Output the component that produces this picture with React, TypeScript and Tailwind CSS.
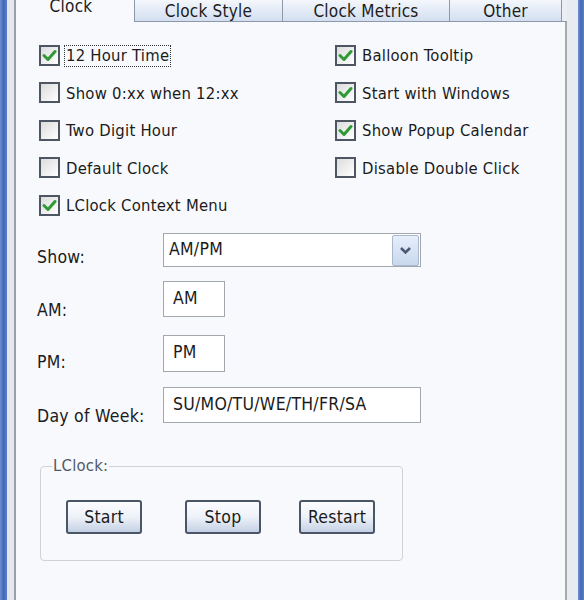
import React from "react";

const font = { fontFamily: '"DejaVu Sans Condensed", "DejaVu Sans", sans-serif', fontStretch: "semi-condensed" as const };

function Check({ checked, label, focus }: { checked?: boolean; label: string; focus?: boolean }) {
  return (
    <div className="flex items-center h-[22px]">
      <div className="w-[21px] h-[21px] border-2 border-[#4d5662] bg-gradient-to-br from-[#dcdcdc] to-[#ffffff] flex items-center justify-center shrink-0">
        {checked && (
          <svg width="15" height="13" viewBox="0 0 15 13">
            <path d="M2 6.5 L6 10.5 L13 2.5" stroke="#2f9a35" strokeWidth="3" fill="none" strokeLinecap="round" strokeLinejoin="round" />
          </svg>
        )}
      </div>
      <span
        className={
          "ml-[4px] px-[1px] leading-[20px] mt-[2px] " +
          (focus ? "border border-dotted border-[#333]" : "border border-transparent")
        }
      >
        {label}
      </span>
    </div>
  );
}

function Btn({ label }: { label: string }) {
  return (
    <div className="w-[76px] h-[34px] rounded-[3px] border-2 border-[#4a5566] bg-gradient-to-b from-[#fbfcfe] via-[#eef2f8] to-[#c4d1e4] flex items-center justify-center text-[#1a1a1a] text-[17.5px]">
      {label}
    </div>
  );
}

export default function App() {
  return (
    <div className="w-[584px] h-[600px] flex bg-[#eceef3] overflow-hidden text-[16.5px] tracking-[0.25px] text-[#1b1b1b]" style={font}>
      {/* left frame */}
      <div className="w-[7px] h-full bg-gradient-to-r from-[#6f91d2] via-[#4469b8] to-[#5b7fc8]" />
      <div className="w-[7px] h-full bg-[#e4e7ee]" />
      {/* main */}
      <div className="w-[553px] h-full flex flex-col">
        {/* tabs */}
        <div className="h-[22px] flex shrink-0">
          <div className="w-[121px] h-full bg-[#f8f9fc] border-l-2 border-[#9a9ea6] border-r border-r-[#8d99aa] flex items-start justify-center pr-[8px] overflow-hidden">
            <span className="leading-[16px] -mt-[2px] text-[17px]">Clock</span>
          </div>
          <div className="w-[148px] h-full border-r border-b border-[#8d99aa] bg-gradient-to-b from-[#f4f7fc] to-[#d3dff0] flex items-center justify-center">
            <span className="leading-[18px] text-[17px]">Clock Style</span>
          </div>
          <div className="w-[167px] h-full border-r border-b border-[#8d99aa] bg-gradient-to-b from-[#f4f7fc] to-[#d3dff0] flex items-center justify-center">
            <span className="leading-[18px] text-[17px]">Clock Metrics</span>
          </div>
          <div className="w-[112px] h-full border-r border-b border-[#8d99aa] bg-gradient-to-b from-[#f4f7fc] to-[#d3dff0] flex items-center justify-center">
            <span className="leading-[18px] text-[17px]">Other</span>
          </div>
          <div className="flex-1 h-full border-b border-[#8d99aa]" />
        </div>
        {/* panel */}
        <div className="flex-1 bg-[#f8f9fc] border-l-2 border-[#9a9ea6] border-r-2 border-r-[#a7a9ad] pt-[22px] pl-[23px]">
          <div className="grid grid-cols-[296px_1fr] gap-y-[15.5px]">
            <Check checked label="12 Hour Time" focus />
            <Check checked label="Balloon Tooltip" />
            <Check label="Show 0:xx when 12:xx" />
            <Check checked label="Start with Windows" />
            <Check label="Two Digit Hour" />
            <Check checked label="Show Popup Calendar" />
            <Check label="Default Clock" />
            <Check label="Disable Double Click" />
            <Check checked label="LClock Context Menu" />
          </div>

          <div className="-ml-[2px] mt-[17px] flex flex-col text-[17.5px]">
            {/* Show */}
            <div className="flex h-[34px]">
              <div className="w-[126px] mt-[14px] leading-[20px]">Show:</div>
              <div className="w-[258px] h-[34px] border border-[#a2a7ae] bg-white flex items-center justify-between pl-[5px] pr-[1px]">
                <span className="leading-[20px] -mt-[3px]">AM/PM</span>
                <div className="w-[27px] h-[31px] border border-[#a9b8cd] rounded-[2px] bg-gradient-to-b from-[#e6eefa] to-[#c9d8ee] flex items-center justify-center">
                  <svg width="13" height="9" viewBox="0 0 13 9">
                    <path d="M2 2 L6.5 6.5 L11 2" stroke="#4a5a75" strokeWidth="2.6" fill="none" />
                  </svg>
                </div>
              </div>
            </div>
            {/* AM */}
            <div className="flex h-[36px] mt-[14px]">
              <div className="w-[126px] mt-[19px] leading-[20px]">AM:</div>
              <div className="w-[62px] h-[36px] border border-[#a2a7ae] bg-white pl-[9px] pt-[6px] leading-[20px]">AM</div>
            </div>
            {/* PM */}
            <div className="flex h-[37px] mt-[18px]">
              <div className="w-[126px] mt-[17px] leading-[20px]">PM:</div>
              <div className="w-[62px] h-[37px] border border-[#a2a7ae] bg-white pl-[9px] pt-[6px] leading-[20px]">PM</div>
            </div>
            {/* Day of week */}
            <div className="flex h-[36px] mt-[15px]">
              <div className="w-[126px] mt-[19px] leading-[20px]">Day of Week:</div>
              <div className="w-[258px] h-[36px] border border-[#a2a7ae] bg-white pl-[9px] pt-[6px] leading-[20px]">SU/MO/TU/WE/TH/FR/SA</div>
            </div>
          </div>

          {/* group */}
          <div className="relative ml-[1px] mt-[43px] w-[363px] h-[95px] border border-[#cfd2d7] rounded-[4px]">
            <span className="absolute -top-[11px] left-[11px] px-[1px] bg-[#f8f9fc] leading-[20px] text-[#4f5868]">LClock:</span>
            <div className="flex pt-[33px] pl-[25px]">
              <Btn label="Start" />
              <div className="w-[43px]" />
              <Btn label="Stop" />
              <div className="w-[38px]" />
              <Btn label="Restart" />
            </div>
          </div>
        </div>
      </div>
      {/* right frame */}
      <div className="w-[11px] h-full bg-[#e8ebf1]" />
      <div className="flex-1 h-full bg-gradient-to-r from-[#6f91d2] via-[#4469b8] to-[#5b7fc8]" />
    </div>
  );
}
